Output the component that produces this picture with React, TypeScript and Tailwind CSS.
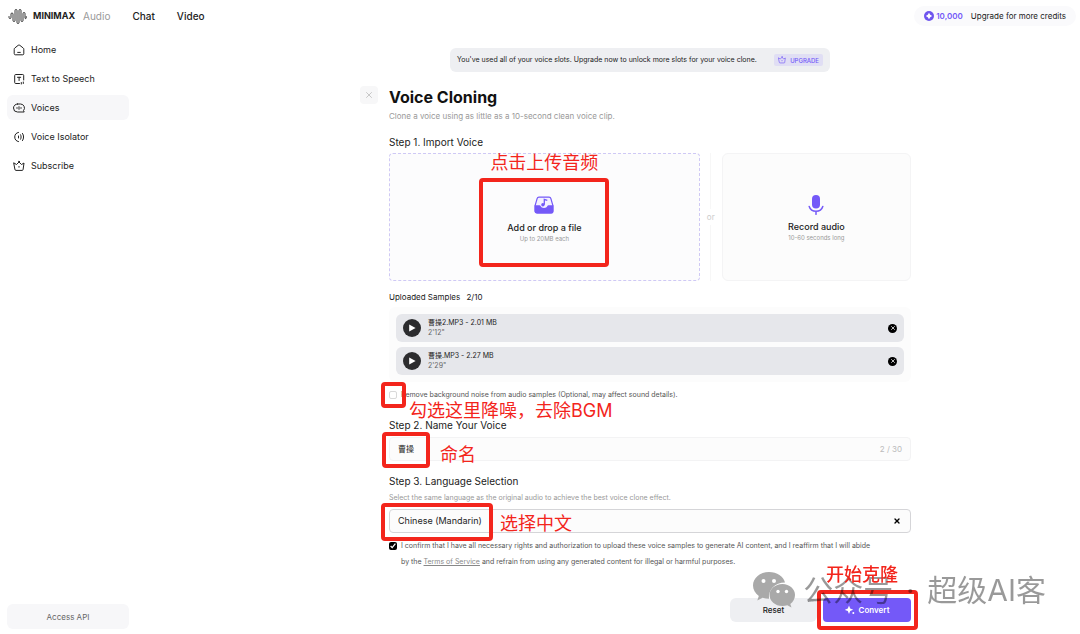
import { useState } from "react"
import clsx from "clsx"
import { X } from "lucide-react"

const navItems = [
  { label: "Home", icon: HomeIcon },
  { label: "Text to Speech", icon: SpeechIcon },
  { label: "Voices", icon: VoicesIcon, active: true },
  { label: "Voice Isolator", icon: IsolatorIcon },
  { label: "Subscribe", icon: CrownIcon },
]

const samples = [
  { name: "曹操2.MP3 - 2.01 MB", duration: "2'12\"" },
  { name: "曹操.MP3 - 2.27 MB", duration: "2'29\"" },
]

function HomeIcon({ className }: { className?: string }) {
  return (
    <svg viewBox="0 0 12 12" fill="none" stroke="currentColor" strokeLinecap="round" strokeLinejoin="round" className={className}>
      <path d="M1.200 5.200c0-.5.200-.9.600-1.200L5.200 1.300c.5-.4 1.100-.4 1.600 0L10.200 4c.4.300.6.700.6 1.200v4.600c0 .6-.4 1-1 1H2.200c-.6 0-1-.4-1-1zM4.700 8.400h2.600" />
    </svg>
  )
}

function SpeechIcon({ className }: { className?: string }) {
  return (
    <svg viewBox="0 0 12 12" fill="none" stroke="currentColor" strokeLinecap="round" strokeLinejoin="round" className={className}>
      <path d="M6.500 10.500H2.700a1 1 0 0 1-1-1v-7a1 1 0 0 1 1-1h7a1 1 0 0 1 1 1v4.500M4.500 4.300h3.200M6.100 4.300v3.200M8.300 9.500v1.500M10.300 9v1.500" />
    </svg>
  )
}

function VoicesIcon({ className }: { className?: string }) {
  return (
    <svg viewBox="0 0 12 12" fill="none" stroke="currentColor" strokeLinecap="round" strokeLinejoin="round" className={className}>
      <path d="M4.500 2h3a4 4 0 0 1 3 6.600l.7 1.400H4.500a4 4 0 0 1 0-8zM4 5.600v.8M6 4.700v2.600M8 5.600v.8" />
    </svg>
  )
}

function IsolatorIcon({ className }: { className?: string }) {
  return (
    <svg viewBox="0 0 12 12" fill="none" stroke="currentColor" strokeLinecap="round" className={className}>
      <path d="M5.500 1.400a4.700 4.700 0 0 0 0 9.200M5.500 5v2M7.600 3.800c.7 1.400.7 3 0 4.400M9.500 2.400c1.500 2.200 1.500 5 0 7.200" />
    </svg>
  )
}

function CrownIcon({ className }: { className?: string }) {
  return (
    <svg viewBox="0 0 12 12" fill="none" stroke="currentColor" strokeLinecap="round" strokeLinejoin="round" className={className}>
      <path d="M1 3l2.500 1.500L6 2l2.500 2.500L11 3l-.9 6.500a1 1 0 0 1-1 .9H2.900a1 1 0 0 1-1-.9zM6 6.500v.7" />
      <circle cx="6" cy="1.500" r=".4" />
    </svg>
  )
}

function Logo() {
  return (
    <svg viewBox="0 0 19 17" fill="none" stroke="#222" strokeWidth=".9" strokeLinecap="round" className="h-[17px] w-[19px]">
      <path d="M1 8.500v1a1 1 0 0 0 2 0V6a1 1 0 0 1 2 0v6.500a1 1 0 0 0 2 0V2.500a1 1 0 0 1 2 0v12a1 1 0 0 0 2 0V2.500a1 1 0 0 1 2 0v10a1 1 0 0 0 2 0V5.500a1 1 0 0 1 2 0V10a.6.6 0 0 0 1.200 0V8.500" />
    </svg>
  )
}

function TrayIcon() {
  return (
    <svg viewBox="0 0 20 18" className="h-[18px] w-5">
      <path d="M5 1.100h10a2 2 0 0 1 1.900 1.500L18.900 9.500v5.500a2 2 0 0 1-2 2H3.100a2 2 0 0 1-2-2V9.500l2-6.900A2 2 0 0 1 5 1.100z" fill="#f4f1ff" stroke="#7459f8" strokeWidth="1.200" />
      <path d="M.6 9.200h4.900c.6 0 .9.400 1.100.900.500 1.200 1.700 2 3.400 2s2.900-.8 3.400-2c.2-.5.500-.9 1.100-.9h4.900V15a2.500 2.500 0 0 1-2.500 2.500H3.100A2.500 2.500 0 0 1 .6 15z" fill="#7459f8" />
      <path d="M10.300 8.700V3.300l3 1" fill="none" stroke="#7459f8" strokeWidth="1.300" />
      <circle cx="8.900" cy="8.700" r="1.700" fill="#7459f8" />
    </svg>
  )
}

function MicIcon() {
  return (
    <svg viewBox="0 0 16 20" className="h-5 w-4">
      <rect x="4" y="0" width="8" height="13.500" rx="4" fill="#7459f8" />
      <path d="M1.200 11.500c1 3.200 3.600 4.800 6.800 4.800s5.800-1.600 6.800-4.800M8 16.300v3" fill="none" stroke="#7459f8" strokeWidth="1.500" strokeLinecap="round" />
    </svg>
  )
}

function Spark() {
  return (
    <svg viewBox="0 0 10 10" fill="currentColor" className="size-2.5">
      <path d="M4 .6l1.200 3 3 1.200-3 1.200L4 9l-1.200-3-3-1.200 3-1.200z" />
      <circle cx="8.300" cy="8" r="1" />
    </svg>
  )
}

// red outline drawn around a control
function Mark({ className }: { className: string }) {
  return <div className={clsx("pointer-events-none absolute z-20 rounded-sm border-4 border-[#f3251c]", className)} />
}

// red hint next to a control
function Note({ className, children }: { className: string; children: string }) {
  return (
    <span className={clsx("pointer-events-none absolute z-40 text-[18px] leading-5 whitespace-nowrap text-[#f3251c]", className)}>
      {children}
    </span>
  )
}

function Watermark() {
  return (
    <div className="pointer-events-none fixed right-[34px] bottom-6 z-30 flex h-10 items-center text-[30px] text-black/40">
      <svg viewBox="0 0 42 36" className="mr-2 h-9 w-[42px]">
        <path d="M16 0C7 0 0 6 0 13.500 0 17.700 2.200 21.400 5.800 24L4.300 28.500l5.300-2.700c2 .6 4.200 1 6.400 1C15 18 22 10.500 32 10.500 30.500 4.500 24 0 16 0z" fill="#a9a9a9" />
        <path d="M29.500 12C22 12 16.500 17 16.500 23s5.500 11 13 11c1.700 0 3.300-.2 4.800-.7l4.200 2.300-1.200-3.700C40.200 29.800 42 26.600 42 23c0-6-5.500-11-12.500-11z" fill="#a9a9a9" />
        <g fill="#fff">
          <circle cx="10.500" cy="9" r="2" />
          <circle cx="21" cy="9" r="2" />
          <circle cx="25" cy="19.500" r="1.700" />
          <circle cx="33.500" cy="19.500" r="1.700" />
        </g>
      </svg>
      <span>公众号</span>
      <span className="w-[34px] text-center">·</span>
      <span>超级AI客</span>
    </div>
  )
}

export default function App() {
  const [name, setName] = useState("曹操")
  const [denoise, setDenoise] = useState(false)
  const [confirmed, setConfirmed] = useState(true)

  return (
    <div className="flex min-h-screen flex-col bg-white font-['Inter','Noto_Sans_CJK_SC',sans-serif] text-[#222]">
      <header className="flex h-8 items-center justify-between pr-1 pl-2">
        <div className="flex items-center">
          <Logo />
          <span className="ml-1.5 text-[9px] font-bold">MINIMAX</span>
          <nav className="ml-2 flex items-center gap-[22px] text-[10px] font-medium">
            <a href="#audio" className="font-normal text-[#9a9a9a]">Audio</a>
            <a href="#chat">Chat</a>
            <a href="#video">Video</a>
          </nav>
        </div>
        <a href="#credits" className="flex h-5 items-center rounded-full bg-[#fafafc] px-2.5 text-[8px]">
          <svg viewBox="0 0 10 10" className="mr-0.5 size-2.5">
            <circle cx="5" cy="5" r="5" fill="#6e55ee" />
            <path d="M5 1.800L6.200 3.800 8.200 5 6.200 6.200 5 8.200 3.800 6.200 1.800 5 3.800 3.800z" fill="#fff" />
          </svg>
          <span className="font-semibold text-[#7459f8]">10,000</span>
          <span className="ml-2">Upgrade for more credits</span>
        </a>
      </header>

      <div className="flex flex-1">
        <aside className="flex w-[200px] shrink-0 flex-col justify-between pt-[5px] pb-[5px] pl-[7px]">
          <nav className="flex w-[122px] flex-col gap-1">
            {navItems.map(({ label, icon: Icon, active }) => (
              <a
                key={label}
                href="#"
                className={clsx("flex h-[25px] items-center gap-1.5 rounded-md px-1.5 text-[9px]", active && "bg-[#f7f7f9]")}
              >
                <Icon className="size-3" />
                {label}
              </a>
            ))}
          </nav>
          <button className="h-[25px] w-[122px] rounded-md bg-[#f7f7f9] text-[8px] text-[#666]">Access API</button>
        </aside>

        <main className="flex flex-1 flex-col items-center pt-4">
          <div className="flex h-6 min-w-[380px] items-center justify-between gap-2 rounded-md bg-[#eeeff2] px-[7px] text-[7px]">
            You've used all of your voice slots. Upgrade now to unlock more slots for your voice clone.
            <button className="flex h-3 items-center gap-1 rounded-xs bg-[#e0def4] px-1 text-[6px] font-medium text-[#7459f8]">
              <CrownIcon className="size-2" />
              UPGRADE
            </button>
          </div>

          <div className="mt-[13px] flex w-full max-w-[560px] items-start gap-[11px] pr-[9px]">
            <button aria-label="Close" className="mt-px flex size-[18px] shrink-0 items-center justify-center rounded-sm bg-[#f7f7f8] text-[#aaa]">
              <X className="size-2.5" strokeWidth={1.5} />
            </button>

            <form className="flex min-w-0 flex-1 flex-col" onSubmit={(e) => e.preventDefault()}>
              <h1 className="text-[16px] leading-6 font-bold text-[#111]">Voice Cloning</h1>
              <p className="mt-px text-[8px] leading-3 text-[#999]">Clone a voice using as little as a 10-second clean voice clip.</p>

              <h2 className="mt-3 text-[10px] leading-4">Step 1. Import Voice</h2>
              <div className="mt-[3px] flex h-32">
                <div className="relative flex-[312]">
                  <button className="flex size-full flex-col items-center rounded-sm border border-dashed border-[#cfc9f5] bg-[#fcfcfd] pt-[42px]">
                    <TrayIcon />
                    <span className="mt-2 text-[9px] leading-3 font-medium">Add or drop a file</span>
                    <span className="text-[6px] leading-2.5 text-[#999]">Up to 20MB each</span>
                  </button>
                  <Note className="top-0 left-1/2 -translate-x-1/2">点击上传音频</Note>
                  <Mark className="top-[25px] left-1/2 h-[89px] w-[130px] -translate-x-1/2" />
                </div>
                <div className="flex w-[22px] shrink-0 flex-col items-center text-[8px] text-[#ccc]">
                  <div className="w-px flex-1 bg-[#f7f7f7]" />
                  <span className="py-0.5">or</span>
                  <div className="w-px flex-1 bg-[#f7f7f7]" />
                </div>
                <button className="flex flex-[188] flex-col items-center rounded-md border border-[#f4f4f5] bg-[#fcfcfc] pt-[41px]">
                  <MicIcon />
                  <span className="mt-1.5 text-[9px] leading-3 font-medium">Record audio</span>
                  <span className="text-[6px] leading-2.5 text-[#999]">10-60 seconds long</span>
                </button>
              </div>

              <h2 className="mt-2 text-[8px] leading-4">
                Uploaded Samples <span className="ml-1">2/10</span>
              </h2>
              <ul className="mt-0.5 flex flex-col gap-[5px] rounded-md bg-[#fcfcfc] p-[7px]">
                {samples.map((s) => (
                  <li key={s.name} className="flex h-7 items-center rounded-md bg-[#e6e7eb] px-[7px]">
                    <button type="button" aria-label="Play" className="flex size-[18px] items-center justify-center rounded-full bg-[#2c2c2e]">
                      <svg viewBox="0 0 8 8" fill="#fff" className="size-2">
                        <path d="M1.200 .6v6.800L7.600 4z" />
                      </svg>
                    </button>
                    <div className="ml-[7px] flex-1 text-[7px] leading-[10px]">
                      <p>{s.name}</p>
                      <p className="text-[#666]">{s.duration}</p>
                    </div>
                    <button type="button" aria-label="Remove sample" className="flex size-[9px] items-center justify-center rounded-full bg-black text-white">
                      <X className="size-1.5" strokeWidth={3} />
                    </button>
                  </li>
                ))}
              </ul>

              <div className="relative mt-[5px] flex h-4 items-center">
                <input
                  id="denoise"
                  type="checkbox"
                  checked={denoise}
                  onChange={(e) => setDenoise(e.target.checked)}
                  className="size-2 appearance-none rounded-xs border border-[#d9d9d9] checked:bg-black"
                />
                <label htmlFor="denoise" className="ml-1 text-[7px] text-[#555]">
                  Remove background noise from audio samples (Optional, may affect sound details).
                </label>
                <Mark className="-top-[5px] -left-2 h-[26px] w-[25px]" />
                <Note className="top-3.5 left-5">勾选这里降噪，去除BGM</Note>
              </div>

              <label htmlFor="voice-name" className="mt-3.5 text-[10px] leading-4">Step 2. Name Your Voice</label>
              <div className="relative mt-1 flex h-6 items-center rounded-sm border border-[#f3f3f4] bg-[#fcfcfc] px-2 text-[8px]">
                <input
                  id="voice-name"
                  value={name}
                  maxLength={30}
                  onChange={(e) => setName(e.target.value)}
                  className="min-w-0 flex-1 bg-transparent outline-none"
                />
                <span className="text-[#bbb]">{name.length} / 30</span>
                <Mark className="-top-1.5 -left-2 h-9 w-12" />
                <Note className="top-[7px] left-[50px]">命名</Note>
              </div>

              <label htmlFor="language" className="mt-3 text-[10px] leading-4">Step 3. Language Selection</label>
              <p className="mt-[3px] text-[7px] leading-3 text-[#999]">Select the same language as the original audio to achieve the best voice clone effect.</p>
              <div className="relative mt-[5px] flex h-6 items-center rounded-sm border border-[#d5d5d8] bg-[#fcfcfc] px-2 text-[9px]">
                <select id="language" className="min-w-0 flex-1 appearance-none bg-transparent outline-none">
                  <option>Chinese (Mandarin)</option>
                </select>
                <button type="button" aria-label="Clear language" className="px-px text-black">
                  <X className="size-2" strokeWidth={4} />
                </button>
                <Mark className="-top-[7px] -left-[9px] h-[38px] w-28" />
                <Note className="top-1 left-[110px]">选择中文</Note>
              </div>

              <div className="mt-[5px] flex pr-8">
                <input
                  id="confirm"
                  type="checkbox"
                  checked={confirmed}
                  onChange={(e) => setConfirmed(e.target.checked)}
                  className="mt-1 size-2 shrink-0 accent-black"
                />
                <label htmlFor="confirm" className="ml-1 text-[7px] leading-4 text-[#555]">
                  I confirm that I have all necessary rights and authorization to upload these voice samples to generate AI content, and I reaffirm that I will abide by the{" "}
                  <a href="#terms" className="text-[#888] underline">Terms of Service</a> and refrain from using any generated content for illegal or harmful purposes.
                </label>
              </div>

              <div className="mt-7 flex justify-end gap-1.5 text-[8px] font-medium">
                <button type="reset" className="h-6 w-[87px] rounded-md bg-[#eeeff2]">Reset</button>
                <div className="relative">
                  <button type="submit" className="flex h-6 w-[88px] items-center justify-center gap-1 rounded-sm bg-[#7459f8] font-semibold text-white">
                    <Spark />
                    Convert
                  </button>
                  <Mark className="-top-2 -right-[7px] h-10 w-[101px]" />
                  <Note className="-top-[33px] left-[3px]">开始克隆</Note>
                </div>
              </div>
            </form>
          </div>
        </main>
      </div>
      <Watermark />
    </div>
  )
}
